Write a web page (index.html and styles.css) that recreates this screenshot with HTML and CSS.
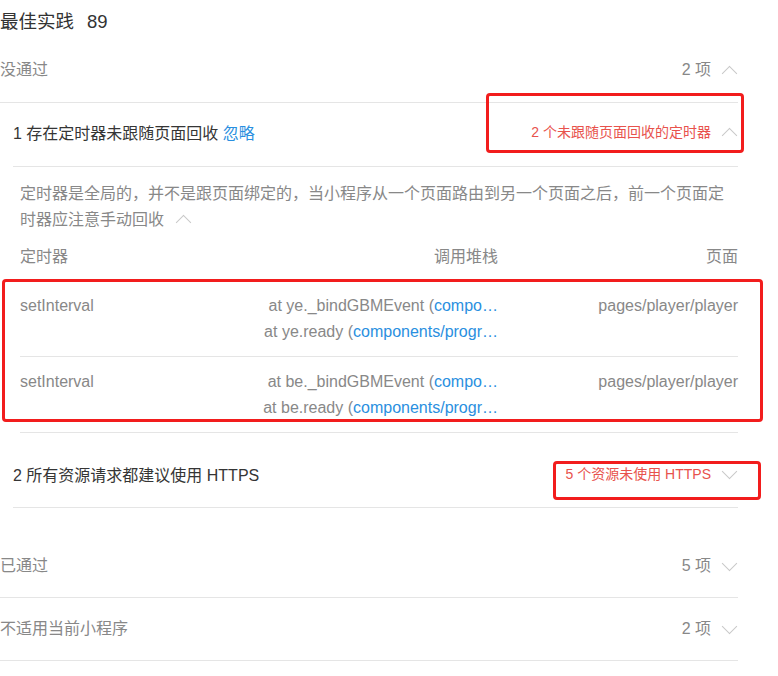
FILE: index.html
```html
<!DOCTYPE html>
<html lang="zh-CN">
<head>
  <meta charset="UTF-8" />
  <meta name="viewport" content="width=device-width, initial-scale=1.0" />
  <title>最佳实践</title>
  <link rel="stylesheet" href="styles.css">
</head>
<body>
  <div class="page">
    <h2 class="score">最佳实践<span class="num">89</span></h2>

    <div class="group-head first">
      <span class="group-name">没通过</span>
      <span class="count">2 项 <i class="chev up"></i></span>
    </div>

    <div class="item">
      <div class="item-head">
        <span class="item-title">1 存在定时器未跟随页面回收 <a class="ignore">忽略</a></span>
        <span class="warn">2 个未跟随页面回收的定时器 <i class="chev up"></i></span>
      </div>
      <div class="detail">
        <p class="desc">定时器是全局的，并不是跟页面绑定的，当小程序从一个页面路由到另一个页面之后，前一个页面定时器应注意手动回收 <i class="chev up"></i></p>
        <div class="table">
          <div class="row head">
            <span>定时器</span>
            <span class="stack">调用堆栈</span>
            <span class="pg">页面</span>
          </div>
          <div class="row">
            <span>setInterval</span>
            <span class="stack">
              <span class="line">at ye._bindGBMEvent (<b>compo…</b></span>
              <span class="line">at ye.ready (<b>components/progr…</b></span>
            </span>
            <span class="pg">pages/player/player</span>
          </div>
          <div class="row">
            <span>setInterval</span>
            <span class="stack">
              <span class="line">at be._bindGBMEvent (<b>compo…</b></span>
              <span class="line">at be.ready (<b>components/progr…</b></span>
            </span>
            <span class="pg">pages/player/player</span>
          </div>
        </div>
      </div>
    </div>

    <div class="item">
      <div class="item-head last">
        <span class="item-title">2 所有资源请求都建议使用 HTTPS</span>
        <span class="warn">5 个资源未使用 HTTPS <i class="chev down"></i></span>
      </div>
    </div>

    <div class="group-head gap">
      <span class="group-name">已通过</span>
      <span class="count">5 项 <i class="chev down"></i></span>
    </div>

    <div class="group-head">
      <span class="group-name">不适用当前小程序</span>
      <span class="count">2 项 <i class="chev down"></i></span>
    </div>

    <!-- red marks drawn over the capture -->
    <div class="mark m1"></div>
    <div class="mark m2"></div>
    <div class="mark m3"></div>
  </div>
</body>
</html>
```

FILE: styles.css
```css
body {
  margin: 0;
  background: #fff;
  font-family: "Liberation Sans", Arial, "Noto Sans CJK SC", sans-serif;
  color: #353535;
}

.page {
  position: relative;
  width: 738px;
  min-height: 676px;
}

.score {
  margin: 0;
  padding-top: 9px;
  height: 30px;
  font-size: 18.5px;
  font-weight: normal;
  line-height: 26px;
  color: #333;
}

.score .num {
  margin-left: 13px;
}

.group-head {
  display: flex;
  justify-content: space-between;
  align-items: center;
  padding: 20px 0 20px;
  line-height: 22px;
  font-size: 16px;
  color: #888;
  border-bottom: 1px solid #e5e5e5;
}

.group-head.first {
  padding-bottom: 21px;
}

.group-head.gap {
  margin-top: 27px;
}

.count {
  display: flex;
  align-items: center;
  gap: 10px;
}

.chev {
  display: inline-block;
  width: 11px;
  height: 11px;
  border-left: 1.6px solid #c8c8c8;
  border-top: 1.6px solid #c8c8c8;
  box-sizing: border-box;
}

.chev.up {
  transform: translateY(3px) rotate(45deg);
  margin: 0 3px;
}

.chev.down {
  transform: translateY(-3px) rotate(225deg);
  margin: 0 3px;
}

.item {
  margin-left: 13px;
}

.item-head {
  display: flex;
  justify-content: space-between;
  align-items: center;
  padding: 20px 0 21px;
  line-height: 22px;
  font-size: 16px;
  border-bottom: 1px solid #e5e5e5;
}

.item-head.last {
  padding-bottom: 20px;
}

.ignore {
  color: #2a8fe0;
  cursor: pointer;
}

.warn {
  display: flex;
  align-items: center;
  gap: 10px;
  font-size: 14px;
  color: #e8524c;
  margin-top: -4px;
}

.detail {
  padding: 14px 0 12px 7px;
}

.desc {
  margin: 0;
  font-size: 16px;
  line-height: 26px;
  color: #888;
}

.desc .chev {
  margin-left: 10px;
}

.table {
  margin-top: 11px;
  font-size: 16px;
  line-height: 26px;
  color: #888;
}

.row {
  display: grid;
  grid-template-columns: 1fr 237px 240px;
  padding: 12px 0 11px;
  border-bottom: 1px solid #e5e5e5;
}

.row.head {
  padding: 0;
  margin-bottom: 11px;
  border-bottom: none;
}

.stack {
  text-align: right;
}

.stack .line {
  display: block;
  white-space: nowrap;
}

.stack b {
  font-weight: normal;
  color: #2a8fe0;
}

.pg {
  text-align: right;
}

.mark {
  position: absolute;
  border: 3px solid #f21d1d;
  border-radius: 4px;
}

.m1 {
  left: 486px;
  top: 93px;
  width: 252px;
  height: 54px;
}

.m2 {
  left: 2px;
  top: 279px;
  width: 755px;
  height: 137px;
}

.m3 {
  left: 553px;
  top: 461px;
  width: 202px;
  height: 33px;
}
```
